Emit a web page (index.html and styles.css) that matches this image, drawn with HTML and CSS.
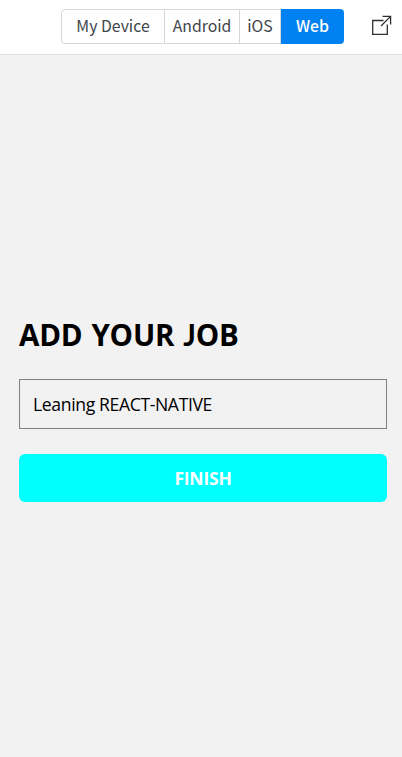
FILE: index.html
```html
<!DOCTYPE html>
<html lang="en">
<head>
<meta charset="utf-8">
<title>Add your job</title>
<link rel="stylesheet" href="styles.css">
</head>
<body>
<header class="toolbar">
  <nav class="tabs">
    <button class="tab tab-device">My Device</button>
    <button class="tab tab-android">Android</button>
    <button class="tab tab-ios">iOS</button>
    <button class="tab tab-web">Web</button>
  </nav>
  <svg class="open-icon" width="20" height="20" viewBox="0 0 20 20" fill="none" stroke="#2f3133" stroke-width="1.3">
    <path d="M11.5 5.5H.7V19.3H15.3V9.5M9 11L18.6 1.4M10.5 1.4H18.6V9.5"/>
  </svg>
</header>
<main class="preview">
  <h1 class="title">ADD YOUR <span class="title-j">J</span>OB</h1>
  <div class="field">Leaning REACT-NATIVE</div>
  <button class="finish">FINISH</button>
</main>
</body>
</html>
```

FILE: styles.css
```css
* { box-sizing: border-box; }
body {
  margin: 0;
  height: 757px;
  display: flex;
  flex-direction: column;
  background: #f2f2f2;
  overflow: hidden;
}
button { margin: 0; padding: 0; border: 0; }
.toolbar {
  height: 55px;
  flex: none;
  display: flex;
  padding: 9px 10px 0 61px;
  justify-content: space-between;
  background: #fff;
  border-bottom: 1px solid #dcdddf;
}
.tabs { display: flex; height: 35px; }
.tab {
  height: 35px;
  padding-bottom: 2px;
  border: 1px solid #d5d6da;
  border-left-width: 0;
  background: #fff;
  color: #40464b;
  font: 15.8px/31px "Noto Sans CJK SC", sans-serif;
  white-space: nowrap;
}
.tab-device { width: 104px; border-left-width: 1px; border-radius: 4px 0 0 4px; }
.tab-android { width: 75px; }
.tab-ios { width: 41px; }
.tab-web {
  width: 63px;
  border: 0;
  border-radius: 0 4px 4px 0;
  background: #0081f1;
  color: #fff;
  font-weight: 500;
}
.open-icon { margin-top: 6px; }
.preview {
  flex: 1;
  display: flex;
  flex-direction: column;
  padding: 260px 15px 0 19px;
  font-family: "Open Sans", sans-serif;
}
.title {
  margin: 0 0 24px;
  font-size: 29.5px;
  line-height: 40px;
  font-weight: 700;
  letter-spacing: -.2px;
  word-spacing: 1.5px;
  color: #000;
  white-space: nowrap;
}
.title-j { font-family: Lato, sans-serif; line-height: 1; }
.field {
  height: 50px;
  padding: 0 13px;
  border: 1px solid #808080;
  font-size: 17.6px;
  line-height: 49px;
  letter-spacing: -.37px;
  color: #000;
}
.finish {
  height: 48px;
  margin-top: 25px;
  padding-top: 1px;
  border-radius: 6px;
  background: #0ff;
  color: #fff;
  font: 700 17.5px/47px "Open Sans", sans-serif;
  letter-spacing: -.2px;
}
```
